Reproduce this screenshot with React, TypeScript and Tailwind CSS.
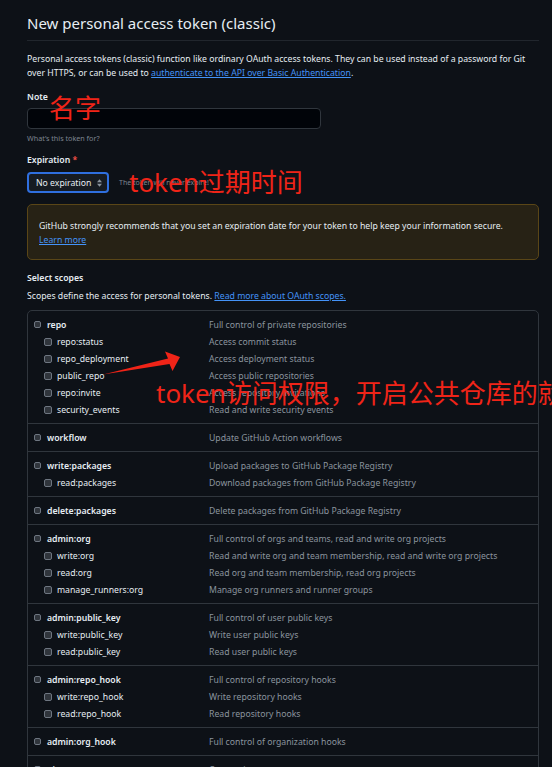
import React from "react";

type Scope = { name: string; desc: string };
type Group = { parent: Scope; children: Scope[] };

const groups: Group[] = [
  {
    parent: { name: "repo", desc: "Full control of private repositories" },
    children: [
      { name: "repo:status", desc: "Access commit status" },
      { name: "repo_deployment", desc: "Access deployment status" },
      { name: "public_repo", desc: "Access public repositories" },
      { name: "repo:invite", desc: "Access repository invitations" },
      { name: "security_events", desc: "Read and write security events" },
    ],
  },
  { parent: { name: "workflow", desc: "Update GitHub Action workflows" }, children: [] },
  {
    parent: { name: "write:packages", desc: "Upload packages to GitHub Package Registry" },
    children: [{ name: "read:packages", desc: "Download packages from GitHub Package Registry" }],
  },
  { parent: { name: "delete:packages", desc: "Delete packages from GitHub Package Registry" }, children: [] },
  {
    parent: { name: "admin:org", desc: "Full control of orgs and teams, read and write org projects" },
    children: [
      { name: "write:org", desc: "Read and write org and team membership, read and write org projects" },
      { name: "read:org", desc: "Read org and team membership, read org projects" },
      { name: "manage_runners:org", desc: "Manage org runners and runner groups" },
    ],
  },
  {
    parent: { name: "admin:public_key", desc: "Full control of user public keys" },
    children: [
      { name: "write:public_key", desc: "Write user public keys" },
      { name: "read:public_key", desc: "Read user public keys" },
    ],
  },
  {
    parent: { name: "admin:repo_hook", desc: "Full control of repository hooks" },
    children: [
      { name: "write:repo_hook", desc: "Write repository hooks" },
      { name: "read:repo_hook", desc: "Read repository hooks" },
    ],
  },
  { parent: { name: "admin:org_hook", desc: "Full control of organization hooks" }, children: [] },
  { parent: { name: "gist", desc: "Create gists" }, children: [] },
  { parent: { name: "notifications", desc: "Access notifications" }, children: [] },
];

function Check({ small }: { small?: boolean }) {
  return (
    <span
      className={`inline-block shrink-0 rounded-[2px] border border-[#6e7681] bg-[#30353c] ${
        small ? "h-[7px] w-[7px]" : "h-[8px] w-[8px]"
      }`}
    />
  );
}

function ScopeRow({ scope, child }: { scope: Scope; child?: boolean }) {
  return (
    <div className="flex h-[17px] items-center">
      <div className={`flex w-[175px] shrink-0 items-center ${child ? "gap-[5px] pl-[10px]" : "gap-[6px]"}`}>
        <Check small={!child} />
        <span className={child ? "text-[#e6edf3]" : "font-semibold text-[#e6edf3]"}>{scope.name}</span>
      </div>
      <span className="whitespace-nowrap text-[#8b949e]">{scope.desc}</span>
    </div>
  );
}

export default function App() {
  return (
    <div
      className="relative min-h-screen overflow-hidden bg-[#0d1117] text-[8.7px] leading-[14px] text-[#e6edf3]"
      style={{ fontFamily: '"Noto Sans", "Noto Sans CJK SC", sans-serif' }}
    >
      <div className="w-[539px] pl-[27px]">
        <div className="border-b border-[#21262d] pb-[7px] pt-[13px]">
          <h1 className="text-[15px] font-normal leading-[20px] text-[#e6edf3]">New personal access token (classic)</h1>
        </div>

        <p className="mt-[11px]">
          Personal access tokens (classic) function like ordinary OAuth access tokens. They can be used instead of a password for Git
          over HTTPS, or can be used to{" "}
          <a className="text-[#4493f8] underline">authenticate to the API over Basic Authentication</a>.
        </p>

        <div className="mt-[10px] font-semibold">Note</div>
        <div className="mt-[4px] h-[21px] w-[294px] rounded-[4px] border border-[#30363d] bg-[#010409]" />
        <div className="mt-[3px] text-[7.2px] leading-[12px] text-[#7d8590]">What’s this token for?</div>

        <div className="mt-[9px] font-semibold">
          Expiration <span className="text-[#f85149]">*</span>
        </div>
        <div className="mt-[5px] flex items-center">
          <div className="flex h-[21px] w-[82px] items-center justify-between rounded-[4px] border-2 border-[#2f6fdf] bg-[#161b22] pl-[7px] pr-[5px]">
            <span>No expiration</span>
            <svg width="5" height="8" viewBox="0 0 6 9" className="fill-[#8b949e]">
              <path d="M3 0 L6 3.5 H0 Z M3 9 L0 5.5 H6 Z" />
            </svg>
          </div>
          <span className="ml-[10px] text-[7px] text-[#7d8590]">The token will never expire!</span>
        </div>

        <div className="mt-[11px] rounded-[5px] border border-[#5a4617] bg-[#272215] pb-[12px] pl-[11px] pt-[14px]">
          <div>GitHub strongly recommends that you set an expiration date for your token to help keep your information secure.</div>
          <a className="text-[#4493f8] underline">Learn more</a>
        </div>

        <div className="mt-[11px] font-semibold">Select scopes</div>
        <div className="mt-[4px]">
          Scopes define the access for personal tokens. <a className="text-[#4493f8] underline">Read more about OAuth scopes.</a>
        </div>

        <div className="mt-[7px] rounded-[5px] border border-[#30363d]">
          {groups.map((g, i) => (
            <div key={g.parent.name} className={`py-[5px] pl-[6px] ${i > 0 ? "border-t border-[#30363d]" : ""}`}>
              <ScopeRow scope={g.parent} />
              {g.children.map((c) => (
                <ScopeRow key={c.name} scope={c} child />
              ))}
            </div>
          ))}
        </div>
      </div>

      {/* red annotations drawn over the screenshot */}
      <div className="absolute left-[49px] top-[92px] text-[26px] leading-[32px] text-[#f02418]">名字</div>
      <div className="absolute left-[129px] top-[166px] text-[26px] leading-[32px] text-[#f02418]">token过期时间</div>
      <div className="absolute left-[156px] top-[377px] whitespace-nowrap text-[26px] leading-[32px] text-[#f02418]">
        token访问权限，开启公共仓库的就
      </div>
      <svg className="absolute left-0 top-0" width="552" height="767" viewBox="0 0 552 767">
        <polygon points="103,374.5 168,358.5 165,351.5 180,357 172.5,371 169.5,364" fill="#f02418" />
      </svg>
    </div>
  );
}
